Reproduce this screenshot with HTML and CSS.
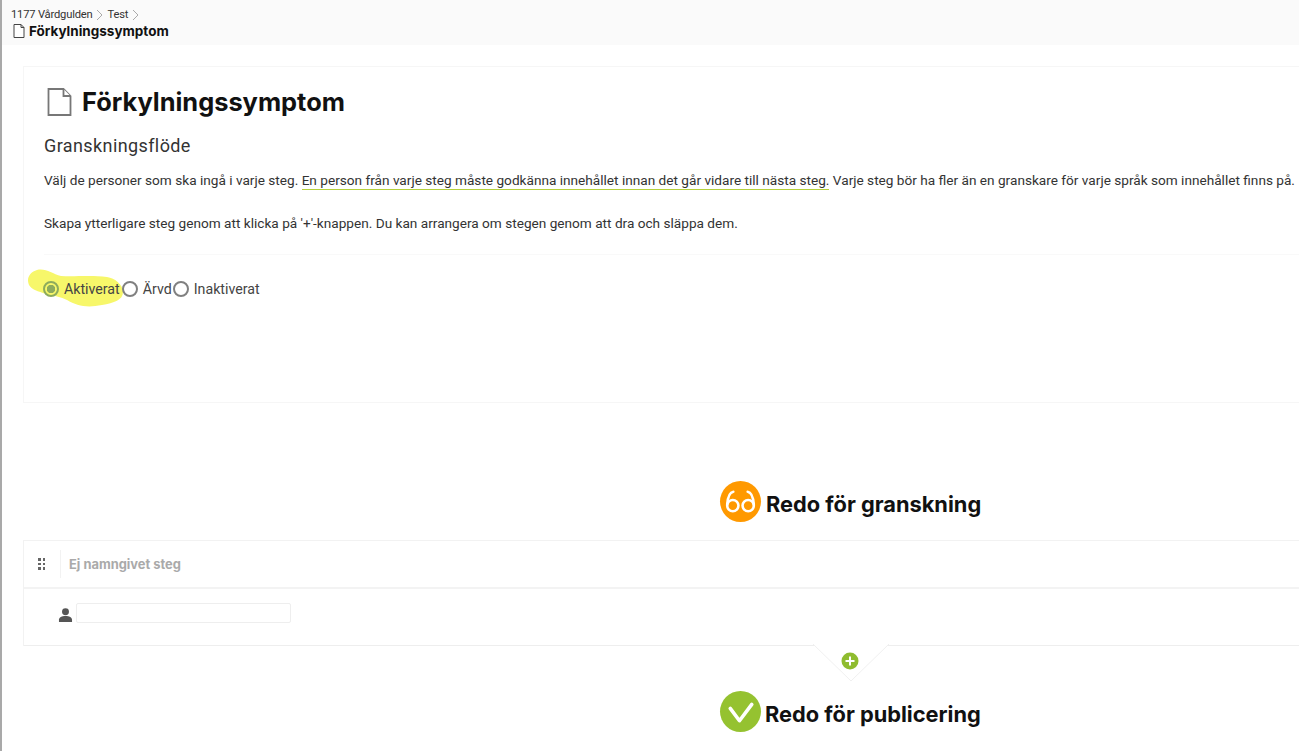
FILE: index.html
```html
<!DOCTYPE html>
<html>
<head>
    <title>Förkylningssymptom</title>
    <link rel="stylesheet" href="styles.css">
</head>
<body>
    <header class="top-bar">
        <div class="crumbs">
            <span>1177 Vårdgulden</span>
            <svg class="crumb-arrow" viewBox="0 0 7 12"><path d="M1 1l5 5-5 5"/></svg>
            <span>Test</span>
            <svg class="crumb-arrow" viewBox="0 0 7 12"><path d="M1 1l5 5-5 5"/></svg>
        </div>
        <div class="top-title">
            <svg class="page-icon-small" viewBox="0 0 24 28"><path d="M2 1h14l6 6v20H2z M16 1v6h6"/></svg>
            <span>Förkylningssymptom</span>
        </div>
    </header>

    <main class="content">
        <section class="panel">
            <h1 class="main-title">
                <svg class="page-icon" viewBox="0 0 24 28"><path d="M1 1h15l7 7v19H1z"/><path d="M16 1v7h7"/></svg>
                Förkylningssymptom
            </h1>
            <h2 class="subtitle">Granskningsflöde</h2>
            <p class="intro">Välj de personer som ska ingå i varje steg. <span class="marked">En person från varje steg måste godkänna innehållet innan det går vidare till nästa steg.</span> Varje steg bör ha fler än en granskare för varje språk som innehållet finns på.</p>
            <p class="intro second">Skapa ytterligare steg genom att klicka på '+'-knappen. Du kan arrangera om stegen genom att dra och släppa dem.</p>
            <div class="divider"></div>
            <div class="radios">
                <svg class="highlight" viewBox="0 0 96 38"><path d="M9 1c9-2 15 4 24 6 12 1 30-1 46 1 8 1 16 8 16 15 0 8-9 11-21 13-15 3-25 1-35-5C28 25 6 25 1 16-2 9 2 3 9 1z"/></svg>
                <label class="radio"><span class="dot checked"></span>Aktiverat</label>
                <label class="radio"><span class="dot"></span>Ärvd</label>
                <label class="radio"><span class="dot"></span>Inaktiverat</label>
            </div>
        </section>

        <div class="state state-review">
            <span class="state-icon orange">
                <svg viewBox="0 0 40 40"><path d="M7 23C7.500 17 9 11 13 10.500M33 23C32.500 17 31 11 27 10.500"/><circle cx="12.500" cy="24" r="5.500"/><circle cx="27.500" cy="24" r="5.500"/></svg>
            </span>
            <span class="state-name">Redo för granskning</span>
        </div>

        <section class="step">
            <div class="step-head">
                <span class="grip"><i></i><i></i><i></i><i></i><i></i><i></i></span>
                <span class="step-name">Ej namngivet steg</span>
            </div>
            <div class="step-body">
                <svg class="person" viewBox="0 0 16 15"><circle cx="8" cy="4" r="3.700"/><path d="M1 15v-2.500C1 10 4 8.500 8 8.500s7 1.500 7 4V15z"/></svg>
                <input class="person-input" type="text">
            </div>
        </section>

        <div class="add-notch">
            <svg class="notch" viewBox="0 0 78 38"><path d="M1 0l38 37L77 0"/></svg>
            <svg class="plus" viewBox="0 0 18 18"><circle cx="9" cy="9" r="8.500"/><path d="M9 4.500v9M4.500 9h9"/></svg>
        </div>

        <div class="state state-publish">
            <span class="state-icon green">
                <svg viewBox="0 0 40 40"><path d="M10 17l9 12 12-16"/></svg>
            </span>
            <span class="state-name">Redo för publicering</span>
        </div>
    </main>
</body>
</html>
```

FILE: styles.css
```css
html, body {
    height: 100%;
}

body {
    margin: 0;
    background: #fff;
    border-left: 2px solid #a9a9a9;
    font-family: Inter, "Liberation Sans", sans-serif;
    color: #222;
    overflow: hidden;
}

.top-bar {
    height: 45px;
    box-sizing: border-box;
    background: #fafafa;
    padding: 7px 0 0 9px;
}

.crumbs {
    display: flex;
    align-items: center;
    gap: 4px;
    font-family: Roboto, sans-serif;
    font-size: 11.2px;
    letter-spacing: -0.2px;
    line-height: 15px;
    color: #333;
}

.crumb-arrow {
    width: 7px;
    height: 12px;
    fill: none;
    stroke: #aaa;
}

.top-title {
    display: flex;
    align-items: center;
    gap: 4px;
    margin: 1px 0 0 2px;
    font-size: 13.5px;
    font-weight: 700;
    line-height: 16px;
    color: #111;
}

.page-icon-small {
    width: 12px;
    height: 14px;
    fill: #fff;
    stroke: #444;
    stroke-width: 2;
}

.content {
    padding: 21px 0 0 21px;
}

.panel {
    position: relative;
    height: 337px;
    box-sizing: border-box;
    border: 1px solid #f6f6f6;
    border-right: 0;
    padding: 18px 0 0 20px;
}

.main-title {
    display: flex;
    align-items: center;
    gap: 10px;
    margin: 0 0 0 3px;
    font-size: 25.4px;
    font-weight: 700;
    line-height: 34px;
    color: #111;
}

.page-icon {
    width: 25px;
    height: 28px;
    fill: #fff;
    stroke: #777;
    stroke-width: 1.8;
}

.subtitle {
    margin: 15px 0 0;
    font-family: Roboto, sans-serif;
    font-size: 18px;
    font-weight: 400;
    letter-spacing: 0.4px;
    line-height: 24px;
    color: #333;
}

.intro {
    margin: 13px 0 0;
    font-family: Roboto, sans-serif;
    font-size: 13.63px;
    line-height: 18px;
    color: #333;
    white-space: nowrap;
}

.intro.second {
    margin-top: 25px;
}

.marked {
    padding-bottom: 1px;
    border-bottom: 1px solid #b5d03c;
}

.divider {
    margin-top: 22px;
    border-top: 1px solid #f9f9f9;
}

.radios {
    position: relative;
    display: flex;
    margin: 25px 0 0 -1px;
}

.highlight {
    position: absolute;
    left: -15px;
    top: -11px;
    width: 96px;
    height: 38px;
    fill: #f7f76a;
}

.radio {
    position: relative;
    display: flex;
    align-items: center;
    gap: 5px;
    margin-right: 2px;
    font-family: Roboto, sans-serif;
    font-size: 14.2px;
    line-height: 18px;
    color: #444;
}

.radio + .radio {
    margin-right: 1px;
}

.dot {
    width: 12px;
    height: 12px;
    border: 2px solid #808080;
    border-radius: 50%;
    background: #fff;
}

.dot.checked {
    border-color: #8dab5d;
    background: radial-gradient(circle, #8dab5d 0 4px, #f7f76a 4.5px);
}

.state {
    display: flex;
    align-items: center;
    gap: 5px;
    margin-left: 697px;
    font-size: 21.8px;
    font-weight: 700;
    color: #111;
}

.state-name {
    margin-top: 5px;
}

.state-review {
    margin-top: 78px;
}

.state-publish {
    margin-top: 8px;
    gap: 4px;
}

.state-icon {
    width: 41px;
    height: 41px;
    border-radius: 50%;
}

.state-icon svg {
    display: block;
    fill: none;
    stroke: #fff;
    stroke-width: 2.5;
    stroke-linecap: round;
    stroke-linejoin: round;
}

.orange {
    background: #ff9900;
}

.green {
    background: #95c230;
}

.green svg {
    stroke-width: 3.5;
}

.step {
    margin-top: 18px;
    border: 1px solid #f2f2f2;
    border-right: 0;
}

.step-head {
    display: flex;
    align-items: center;
    height: 46px;
    border-bottom: 2px solid #f3f3f3;
}

.grip {
    display: grid;
    grid-template-columns: 2.5px 2.5px;
    gap: 2px;
    margin-left: 14px;
    padding-right: 15px;
    height: 28px;
    align-content: center;
    border-right: 1px solid #f2f2f2;
}

.grip i {
    width: 2.5px;
    height: 2.5px;
    background: #666;
}

.step-name {
    margin-left: 8px;
    font-size: 12.9px;
    font-weight: 700;
    color: #aaa;
}

.step-body {
    display: flex;
    align-items: flex-start;
    gap: 3px;
    height: 56px;
    padding: 14px 0 0 34px;
    box-sizing: border-box;
    box-shadow: 0 1px 0 #eee;
}

.person {
    width: 15px;
    height: 14px;
    margin-top: 5px;
    fill: #555;
}

.person-input {
    width: 215px;
    height: 20px;
    box-sizing: border-box;
    border: 1px solid #eee;
    border-radius: 2px;
    background: #fff;
    padding: 0;
}

.add-notch {
    position: relative;
    height: 37px;
    margin: 0 0 0 789px;
    width: 78px;
}

.notch {
    position: absolute;
    top: -2px;
    left: 0;
    width: 78px;
    height: 38px;
    fill: #fff;
    stroke: #f0f0f0;
}

.plus {
    position: absolute;
    left: 29px;
    top: 6px;
    width: 18px;
    height: 18px;
    fill: #8fbc2f;
    stroke: none;
}

.plus path {
    fill: none;
    stroke: #fff;
    stroke-width: 2;
}
```
